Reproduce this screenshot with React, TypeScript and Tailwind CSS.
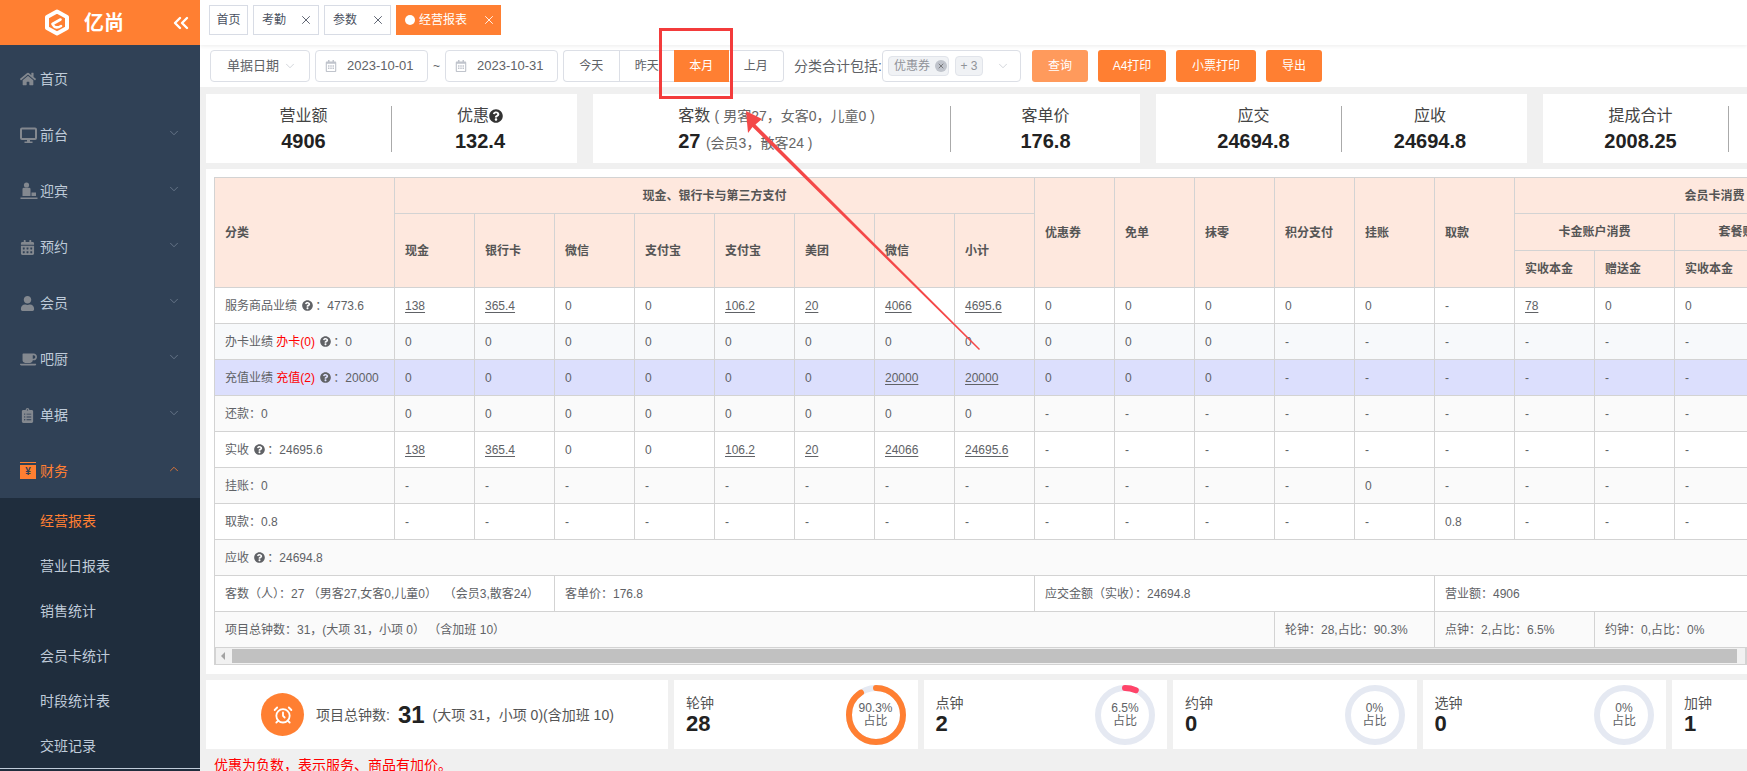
import { ReactNode } from "react";
import { AlarmClock, ChevronDown, ChevronUp, ChevronsLeft, X } from "lucide-react";
import {
  FaCalendarAlt,
  FaClipboardList,
  FaCoffee,
  FaHome,
  FaQuestionCircle,
  FaRegCalendarAlt,
  FaUser,
} from "react-icons/fa";

function Logo() {
  return (
    <svg width="26" height="27" viewBox="0 0 26 27" fill="none">
      <path
        d="M13 2.5 L23 8 V19 L13 24.5 L3 19 V8 Z"
        stroke="#fff"
        strokeWidth="4"
        strokeLinejoin="round"
      />
      <path
        d="M8.5 15 L16.5 10.5 M9 16 C10.5 19 14 19 17 17"
        stroke="#fff"
        strokeWidth="2.6"
        strokeLinecap="round"
      />
    </svg>
  );
}

function MonitorIcon() {
  return (
    <svg width="17" height="17" viewBox="0 0 17 17" fill="none">
      <rect x="1" y="1.5" width="15" height="10.5" rx="1" stroke="#83888f" strokeWidth="2" />
      <rect x="7" y="12.5" width="3" height="2.5" fill="#83888f" />
      <rect x="4.5" y="14.5" width="8" height="1.5" fill="#83888f" />
    </svg>
  );
}

function DeskIcon() {
  return (
    <svg width="18" height="18" viewBox="0 0 18 18" fill="#83888f">
      <circle cx="6.5" cy="3" r="2.6" />
      <path d="M2.5 7 C2.5 6 3.5 5.8 4.5 5.8 H8.5 C9.5 5.8 10.5 6 10.5 7 V14 H2.5 Z" />
      <rect x="11.5" y="10.5" width="4.5" height="3.5" />
      <rect x="0.5" y="15.5" width="17" height="1.5" />
    </svg>
  );
}

function CashIcon() {
  return (
    <span className="flex h-[18px] w-4 flex-col">
      <span className="h-px w-4 bg-[#ff7f32]" />
      <span className="mt-[2px] flex h-[14px] w-4 items-center justify-center bg-[#ff7f32] text-[10px] leading-none font-bold text-[#304156]">
        ¥
      </span>
    </span>
  );
}

const menus: { label: string; icon: ReactNode; arrow?: boolean }[] = [
  { label: "首页", icon: <FaHome size={16} color="#83888f" /> },
  { label: "前台", icon: <MonitorIcon />, arrow: true },
  { label: "迎宾", icon: <DeskIcon />, arrow: true },
  { label: "预约", icon: <FaCalendarAlt size={15} color="#83888f" />, arrow: true },
  { label: "会员", icon: <FaUser size={15} color="#83888f" />, arrow: true },
  { label: "吧厨", icon: <FaCoffee size={17} color="#83888f" />, arrow: true },
  { label: "单据", icon: <FaClipboardList size={15} color="#83888f" />, arrow: true },
];

const subMenus = ["经营报表", "营业日报表", "销售统计", "会员卡统计", "时段统计表", "交班记录"];

function Sidebar() {
  return (
    <aside className="flex w-[200px] shrink-0 flex-col overflow-hidden bg-[#304156]">
      <div className="flex h-[45px] shrink-0 items-center bg-[#ff7f32] pl-[44px] pr-[7px] text-white">
        <Logo />
        <span className="ml-[14px] text-[20px] font-bold leading-none">亿尚</span>
        <ChevronsLeft className="ml-auto" size={24} strokeWidth={2.4} />
      </div>
      <div className="h-[6px] shrink-0" />
      {menus.map((m) => (
        <div key={m.label} className="flex h-[56px] shrink-0 items-center pl-5 pr-[19px] text-sm text-[#bfcbd9]">
          <span className="flex w-[20px] justify-start">{m.icon}</span>
          {m.label}
          {m.arrow && <ChevronDown className="ml-auto mb-1" size={14} strokeWidth={1} color="#8a98a8" />}
        </div>
      ))}
      <div className="flex h-[55px] shrink-0 items-center pl-5 pr-[19px] text-sm text-[#ff7f32]">
        <span className="flex w-[20px]">
          <CashIcon />
        </span>
        财务
        <ChevronUp className="ml-auto mb-1" size={14} strokeWidth={1.4} />
      </div>
      <div className="flex-1 bg-[#1f2d3d]">
        {subMenus.map((s, i) => (
          <div
            key={s}
            className={`flex h-[45px] items-center pl-10 text-sm ${i === 0 ? "text-[#ff7f32]" : "text-[#bfcbd9]"}`}
          >
            {s}
          </div>
        ))}
        <div className="h-px bg-[#bfcbd9]" />
      </div>
    </aside>
  );
}

function TabsBar() {
  return (
    <div className="relative z-10 flex h-[45px] shrink-0 items-start gap-[5px] bg-white pl-[9px] pt-[5px] text-xs text-[#495060] shadow-[0_1px_4px_rgba(0,0,0,0.08)]">
      <div className="flex h-[30px] w-[39px] items-center justify-center border border-[#d8dce5]">首页</div>
      <div className="flex h-[30px] w-[66px] items-center justify-between border border-[#d8dce5] pl-[8px] pr-[5px]">
        考勤 <X size={14} strokeWidth={1.5} />
      </div>
      <div className="flex h-[30px] w-[67px] items-center justify-between border border-[#d8dce5] pl-[8px] pr-[5px]">
        参数 <X size={14} strokeWidth={1.5} />
      </div>
      <div className="flex h-[30px] w-[105px] items-center bg-[#ff7f32] pl-[9px] pr-[5px] text-white">
        <span className="mr-1 h-[10px] w-[10px] rounded-full bg-white" />
        经营报表
        <X className="ml-auto" size={14} strokeWidth={1.5} />
      </div>
    </div>
  );
}

function DateInput({ value }: { value: string }) {
  return (
    <div className="flex h-[32px] w-[113px] items-center gap-[10px] rounded-[4px] border border-[#dcdfe6] pl-[9px] text-[13px] text-[#606266]">
      <FaRegCalendarAlt size={12} color="#c0c4cc" />
      {value}
    </div>
  );
}

function FilterBar() {
  const ranges = ["今天", "昨天", "本月", "上月"];
  const actions = [
    { label: "查询", w: "w-[56px]", bg: "bg-[#ff9a5c]" },
    { label: "A4打印", w: "w-[68px]", bg: "bg-[#ff7f32]" },
    { label: "小票打印", w: "w-[80px]", bg: "bg-[#ff7f32]" },
    { label: "导出", w: "w-[56px]", bg: "bg-[#ff7f32]" },
  ];
  return (
    <div className="flex h-[42px] shrink-0 items-center bg-white pl-[10px] text-xs text-[#606266]">
      <div className="flex h-[32px] w-[100px] items-center justify-between rounded-[4px] border border-[#dcdfe6] pl-4 pr-3 text-[13px]">
        单据日期
        <ChevronDown size={14} strokeWidth={1.2} color="#c0c4cc" />
      </div>
      <div className="ml-[5px]">
        <DateInput value="2023-10-01" />
      </div>
      <span className="w-[17px] text-center">~</span>
      <DateInput value="2023-10-31" />
      <div className="ml-[5px] flex h-[32px] w-[221px]">
        {ranges.map((r, i) => (
          <div
            key={r}
            className={
              r === "本月"
                ? "flex flex-1 items-center justify-center bg-[#ff7f32] text-white"
                : `flex flex-1 items-center justify-center border-y border-[#dcdfe6] ${
                    i === 0 ? "rounded-l-[4px] border-l" : ""
                  } ${i === 3 ? "rounded-r-[4px] border-r" : ""} ${i === 1 ? "border-l" : ""}`
            }
          >
            {r}
          </div>
        ))}
      </div>
      <span className="ml-[10px] w-[88px] overflow-hidden text-[14px] whitespace-nowrap">分类合计包括:</span>
      <div className="flex h-[32px] w-[139px] items-center rounded-[4px] border border-[#dcdfe6] pl-[5px] pr-[10px]">
        <span className="flex h-[20px] w-[61px] items-center justify-between rounded-[4px] border border-[#e1e4ea] bg-[#f0f2f5] pl-[5px] pr-[1px] text-[#909399]">
          优惠券
          <span className="flex h-[12px] w-[12px] items-center justify-center rounded-full bg-[#c0c4cc] text-[#555]">
            <X size={8} />
          </span>
        </span>
        <span className="ml-[6px] flex h-[20px] w-[28px] items-center justify-center rounded-[4px] border border-[#e1e4ea] bg-[#f0f2f5] text-[#909399]">
          + 3
        </span>
        <ChevronDown className="ml-auto" size={14} strokeWidth={1.2} color="#c0c4cc" />
      </div>
      <div className="ml-[11px] flex gap-[10px]">
        {actions.map((a) => (
          <div
            key={a.label}
            className={`flex h-[32px] items-center justify-center rounded-[3px] text-white ${a.w} ${a.bg}`}
          >
            {a.label}
          </div>
        ))}
      </div>
    </div>
  );
}

function StatCell({ title, value, line = true }: { title: ReactNode; value: string; line?: boolean }) {
  return (
    <div className={`flex h-[46px] w-[176px] shrink-0 flex-col items-center justify-center ${line ? "border-r border-[#aaa]" : ""}`}>
      <div className="flex items-center text-base leading-[24px] text-[#444]">{title}</div>
      <div className="text-[20px] leading-[26px] font-bold text-[#222]">{value}</div>
    </div>
  );
}

function StatCards() {
  return (
    <div className="mt-[7px] flex h-[69px] shrink-0 gap-4 pl-[6px]">
      <div className="flex w-[371px] shrink-0 items-center bg-white pl-[10px]">
        <StatCell title="营业额" value="4906" />
        <StatCell
          line={false}
          title={
            <>
              优惠
              <FaQuestionCircle size={14} color="#333" />
            </>
          }
          value="132.4"
        />
      </div>
      <div className="flex w-[547px] shrink-0 items-center bg-white pl-[10px]">
        <div className="flex h-[46px] w-[348px] shrink-0 justify-center border-r border-[#aaa]">
          <div className="flex flex-col justify-center">
            <div className="text-base leading-[24px] text-[#444]">
              客数 <span className="text-sm text-[#666]">( 男客27，女客0，儿童0 )</span>
            </div>
            <div className="text-[20px] leading-[26px] font-bold text-[#222]">
              27 <span className="text-sm font-normal text-[#666]">(会员3，散客24 )</span>
            </div>
          </div>
        </div>
        <div className="flex-1 text-center">
          <div className="text-base leading-[24px] text-[#444]">客单价</div>
          <div className="text-[20px] leading-[26px] font-bold text-[#222]">176.8</div>
        </div>
      </div>
      <div className="flex w-[371px] shrink-0 items-center bg-white pl-[10px]">
        <StatCell title="应交" value="24694.8" />
        <StatCell line={false} title="应收" value="24694.8" />
      </div>
      <div className="flex w-[371px] shrink-0 items-center bg-white pl-[10px]">
        <StatCell title="提成合计" value="2008.25" />
      </div>
    </div>
  );
}

function Help() {
  return <FaQuestionCircle className="mx-[2px] inline align-[-1px]" size={11} color="#606266" />;
}

const topHeads = ["优惠券", "免单", "抹零", "积分支付", "挂账", "取款"];
const payHeads = ["现金", "银行卡", "微信", "支付宝", "支付宝", "美团", "微信", "小计"];

// values with a leading _ are links in the real report
const rows: { label: ReactNode; bg: string; cells: string[] }[] = [
  {
    label: (
      <>
        服务商品业绩 <Help />：4773.6
      </>
    ),
    bg: "bg-white",
    cells: ["_138", "_365.4", "0", "0", "_106.2", "_20", "_4066", "_4695.6", "0", "0", "0", "0", "0", "-", "_78", "0", "0", "0", "0"],
  },
  {
    label: (
      <>
        办卡业绩 <span className="text-[#ff0000]">办卡(0)</span> <Help />：0
      </>
    ),
    bg: "bg-[#f7f9fb]",
    cells: ["0", "0", "0", "0", "0", "0", "0", "0", "0", "0", "0", "-", "-", "-", "-", "-", "-", "-", "-"],
  },
  {
    label: (
      <>
        充值业绩 <span className="text-[#ff0000]">充值(2)</span> <Help />：20000
      </>
    ),
    bg: "bg-[#dcdffd]",
    cells: ["0", "0", "0", "0", "0", "0", "_20000", "_20000", "0", "0", "0", "-", "-", "-", "-", "-", "-", "-", "-"],
  },
  {
    label: "还款：0",
    bg: "bg-[#fafafa]",
    cells: ["0", "0", "0", "0", "0", "0", "0", "0", "-", "-", "-", "-", "-", "-", "-", "-", "-", "-", "-"],
  },
  {
    label: (
      <>
        实收 <Help />：24695.6
      </>
    ),
    bg: "bg-white",
    cells: ["_138", "_365.4", "0", "0", "_106.2", "_20", "_24066", "_24695.6", "-", "-", "-", "-", "-", "-", "-", "-", "-", "-", "-"],
  },
  {
    label: "挂账：0",
    bg: "bg-[#fafafa]",
    cells: ["-", "-", "-", "-", "-", "-", "-", "-", "-", "-", "-", "-", "0", "-", "-", "-", "-", "-", "-"],
  },
  {
    label: "取款：0.8",
    bg: "bg-white",
    cells: ["-", "-", "-", "-", "-", "-", "-", "-", "-", "-", "-", "-", "-", "0.8", "-", "-", "-", "-", "-"],
  },
];

const thBase = "border border-[#d3d3d3] bg-[#fee8de] px-[10px] font-bold text-[#555]";
const th = `${thBase} text-left`;
const thCenter = `${thBase} text-center`;
const td = "h-[36px] border border-[#d3d3d3] px-[10px]";

function ReportTable() {
  return (
    <div className="ml-[6px] mt-[6px] h-[505px] shrink-0 bg-white pl-2 pt-2">
      <div className="h-[488px] overflow-hidden">
        <table className="w-[1700px] table-fixed border-collapse text-xs text-[#606266]">
          <colgroup>
            <col className="w-[180px]" />
            {Array.from({ length: 19 }).map((_, i) => (
              <col key={i} className="w-[80px]" />
            ))}
          </colgroup>
          <thead>
            <tr className="h-[36px]">
              <th rowSpan={3} className={th}>分类</th>
              <th colSpan={8} className={thCenter}>现金、银行卡与第三方支付</th>
              {topHeads.map((h) => (
                <th key={h} rowSpan={3} className={th}>{h}</th>
              ))}
              <th colSpan={5} className={thCenter}>会员卡消费</th>
            </tr>
            <tr className="h-[37px]">
              {payHeads.map((h, i) => (
                <th key={i} rowSpan={2} className={th}>{h}</th>
              ))}
              <th colSpan={2} className={thCenter}>卡金账户消费</th>
              <th colSpan={2} className={thCenter}>套餐账户消费</th>
              <th rowSpan={2} className={th}>小计</th>
            </tr>
            <tr className="h-[37px]">
              <th className={th}>实收本金</th>
              <th className={th}>赠送金</th>
              <th className={th}>实收本金</th>
              <th className={th}>赠送金</th>
            </tr>
          </thead>
          <tbody>
            {rows.map((r, i) => (
              <tr key={i} className={r.bg}>
                <td className={`${td} whitespace-nowrap`}>{r.label}</td>
                {r.cells.map((c, j) => (
                  <td key={j} className={td}>
                    {c.startsWith("_") ? <span className="underline underline-offset-2">{c.slice(1)}</span> : c}
                  </td>
                ))}
              </tr>
            ))}
            <tr className="bg-[#fafafa]">
              <td colSpan={20} className={td}>
                应收 <Help />：24694.8
              </td>
            </tr>
            <tr className="bg-white">
              <td colSpan={3} className={td}>客数（人）：27&nbsp;（男客27,女客0,儿童0）&nbsp;&nbsp;（会员3,散客24）</td>
              <td colSpan={6} className={td}>客单价：176.8</td>
              <td colSpan={5} className={td}>应交金额（实收）：24694.8</td>
              <td colSpan={6} className={td}>营业额：4906</td>
            </tr>
            <tr className="bg-[#fafafa]">
              <td colSpan={12} className={td}>项目总钟数：31，(大项 31，小项 0） （含加班 10）</td>
              <td colSpan={2} className={td}>轮钟：28,占比：90.3%</td>
              <td colSpan={2} className={td}>点钟：2,占比：6.5%</td>
              <td colSpan={2} className={td}>约钟：0,占比：0%</td>
              <td colSpan={2} className={td}>选钟：0,占比：0%</td>
            </tr>
          </tbody>
        </table>
        <div className="flex h-[18px] items-center border-x-2 border-b-2 border-[#d3d3d3] bg-[#f1f1f1]">
          <span className="ml-[5px] h-0 w-0 border-y-[4px] border-r-[4px] border-y-transparent border-r-[#a3a3a3]" />
          <span className="ml-[7px] h-[14px] w-[1505px] bg-[#c1c1c1]" />
        </div>
      </div>
    </div>
  );
}

function Donut({ percent, color }: { percent: number; color: string }) {
  const r = 27;
  const len = 2 * Math.PI * r;
  return (
    <div className="relative h-[60px] w-[60px] shrink-0">
      <svg width="60" height="60" viewBox="0 0 60 60" className="-rotate-90">
        <circle cx="30" cy="30" r={r} fill="none" stroke="#e5e9f2" strokeWidth="6" />
        {percent > 0 && (
          <circle
            cx="30"
            cy="30"
            r={r}
            fill="none"
            stroke={color}
            strokeWidth="6"
            strokeLinecap="round"
            strokeDasharray={`${(len * percent) / 100} ${len}`}
          />
        )}
      </svg>
      <div className="absolute inset-0 flex flex-col items-center justify-center text-xs leading-[13px] text-[#606266]">
        <span>{percent}%</span>
        <span>占比</span>
      </div>
    </div>
  );
}

function ClockCard({ label, value, percent, color }: { label: string; value: string; percent: number; color: string }) {
  return (
    <div className="flex w-[243.5px] shrink-0 items-center justify-between bg-white pl-[12px] pr-[12px]">
      <div>
        <div className="text-sm leading-[18px] text-[#555]">{label}</div>
        <div className="text-[22px] leading-[24px] font-bold text-[#222]">{value}</div>
      </div>
      <Donut percent={percent} color={color} />
    </div>
  );
}

function BottomCards() {
  return (
    <div className="mt-[6px] flex h-[69px] shrink-0 gap-[6px] pl-[6px]">
      <div className="flex w-[462px] shrink-0 items-center bg-white pl-[55px] text-sm text-[#555]">
        <span className="flex h-[43px] w-[43px] items-center justify-center rounded-full bg-[#ff7f32] text-white">
          <AlarmClock size={20} strokeWidth={2.2} />
        </span>
        <span className="ml-[12px]">项目总钟数:</span>
        <span className="ml-[8px] text-[24px] leading-none font-bold text-[#222]">31</span>
        <span className="ml-[8px]">(大项 31，小项 0)(含加班 10)</span>
      </div>
      <ClockCard label="轮钟" value="28" percent={90.3} color="#ff7f32" />
      <ClockCard label="点钟" value="2" percent={6.5} color="#ff4469" />
      <ClockCard label="约钟" value="0" percent={0} color="#ff7f32" />
      <ClockCard label="选钟" value="0" percent={0} color="#ff7f32" />
      <ClockCard label="加钟" value="1" percent={0} color="#ff7f32" />
    </div>
  );
}

// the red marking drawn on top of the screenshot
function Annotation() {
  return (
    <div className="absolute inset-0 z-20">
      <div className="absolute left-[659px] top-[28px] h-[71px] w-[74px] border-[3px] border-[#f33b3b]" />
      <svg className="absolute left-0 top-0" width="1747" height="771" fill="none">
        <polygon
          points="746,111 762,119 755.5,124.5 980,349 979,350 752.5,127 748,133"
          fill="#f44848"
        />
      </svg>
    </div>
  );
}

export default function App() {
  return (
    <div className="relative flex h-[771px] w-[1747px] overflow-hidden bg-[#f0f0f0] font-['Liberation_Sans','Noto_Sans_CJK_SC',sans-serif]">
      <Sidebar />
      <main className="flex min-w-0 flex-1 flex-col overflow-hidden">
        <TabsBar />
        <FilterBar />
        <StatCards />
        <ReportTable />
        <BottomCards />
        <p className="mt-[6px] pl-[14px] text-sm leading-[20px] text-[#ff0000]">优惠为负数，表示服务、商品有加价。</p>
      </main>
      <Annotation />
    </div>
  );
}
